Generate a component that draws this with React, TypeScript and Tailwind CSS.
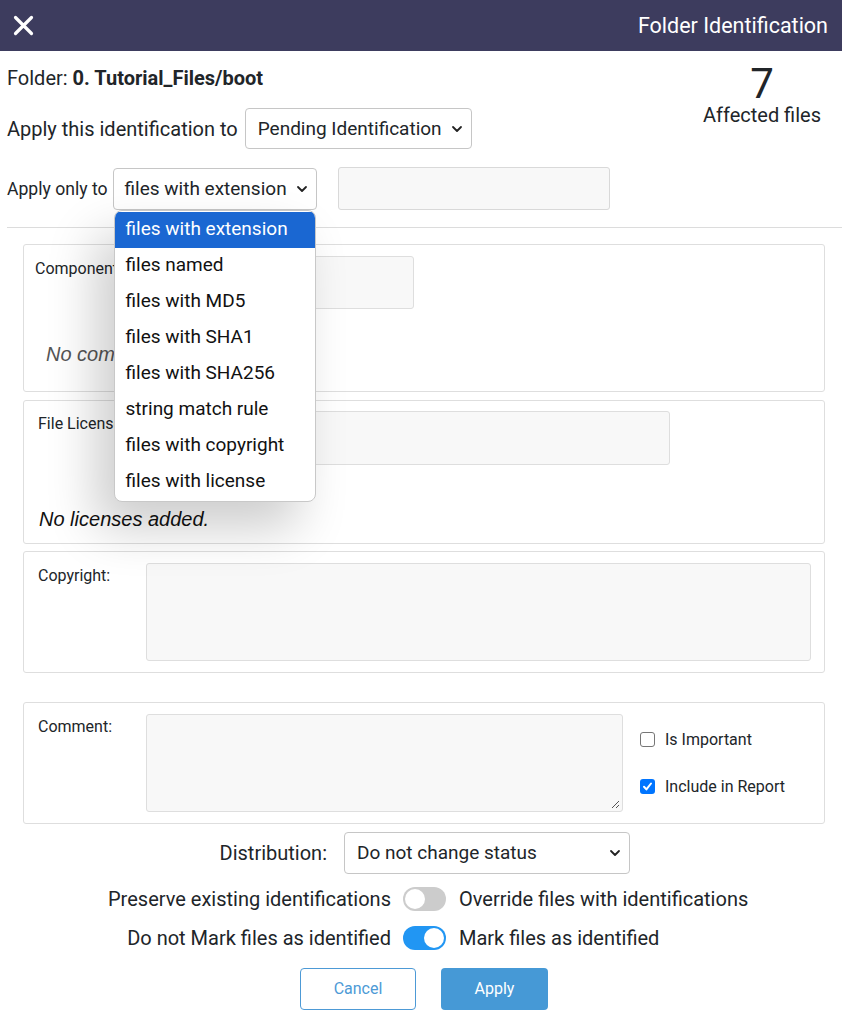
import React from "react";

const Chevron = () => (
  <svg width="12" height="8" viewBox="0 0 12 8" className="shrink-0">
    <path d="M2 2l4 4 4-4" fill="none" stroke="#222" strokeWidth="1.8" strokeLinecap="round" strokeLinejoin="round" />
  </svg>
);

const options = [
  "files with extension",
  "files named",
  "files with MD5",
  "files with SHA1",
  "files with SHA256",
  "string match rule",
  "files with copyright",
  "files with license",
];

const Toggle = ({ on }: { on: boolean }) => (
  <div
    className={
      on
        ? "w-[43px] h-[24px] rounded-full bg-[#2196f3] p-[2px] flex justify-end"
        : "w-[43px] h-[24px] rounded-full bg-[#cccccc] p-[2px] flex justify-start"
    }
  >
    <div className="w-[20px] h-[20px] rounded-full bg-white" />
  </div>
);

const App = () => {
  return (
    <div className="w-[842px] min-h-[1032px] bg-white text-[#212529] font-['Roboto',sans-serif]">
      {/* header */}
      <div className="h-[51px] bg-[#3d3c5e] flex items-center justify-between pl-[13px] pr-[14px] text-white">
        <svg width="21" height="21" viewBox="0 0 21 21">
          <path d="M2.5 2.5l16 16M18.5 2.5l-16 16" stroke="white" strokeWidth="3.2" strokeLinecap="round" />
        </svg>
        <span className="text-[21.5px] leading-[28px]">Folder Identification</span>
      </div>

      {/* top section */}
      <div className="flex justify-between pl-[7px] pr-[21px]">
        <div className="flex flex-col">
          <div className="mt-[15px] h-[24px] text-[20px] leading-[24px]">
            Folder: <span className="font-bold">0. Tutorial_Files/boot</span>
          </div>
          <div className="mt-[18px] flex items-center gap-[7px]">
            <span className="text-[20px] leading-[24px]">Apply this identification to</span>
            <div className="w-[227px] h-[41px] border border-[#c6c6c6] rounded-[4px] flex items-center justify-between pl-[12px] pr-[8px] text-[19px] leading-[24px]">
              <span>Pending Identification</span>
              <Chevron />
            </div>
          </div>
          <div className="mt-[18px] flex items-center">
            <span className="text-[17.6px] leading-[24px] mr-[5px]">Apply only to</span>
            <div className="relative">
              <div className="w-[204px] h-[42px] border border-[#c6c6c6] rounded-[4px] flex items-center justify-between pl-[11px] pr-[8px] text-[19px] leading-[24px]">
                <span>files with extension</span>
                <Chevron />
              </div>
              {/* open menu */}
              <div className="absolute z-10 left-[1px] top-[42px] w-[202px] bg-white rounded-[8px] border border-[#c8c8c8] py-[1px] overflow-hidden shadow-[-18px_26px_50px_rgba(0,0,0,0.2)]">
                {options.map((o, i) => (
                  <div
                    key={o}
                    className={
                      i === 0
                        ? "h-[36px] flex items-center pl-[11px] text-[19px] bg-[#1a67d2] text-white"
                        : "h-[36px] flex items-center pl-[11px] text-[19px] text-[#111]"
                    }
                  >
                    {o}
                  </div>
                ))}
              </div>
            </div>
            <div className="ml-[21px] w-[272px] h-[43px] border border-[#d9d9d9] rounded-[3px] bg-[#f8f8f8]" />
          </div>
        </div>
        <div className="flex flex-col items-center mt-[12px]">
          <span className="text-[42px] leading-[42px]">7</span>
          <span className="text-[20px] leading-[24px] mt-[-2px]">Affected files</span>
        </div>
      </div>

      <div className="ml-[7px] mt-[17px] border-t border-[#dcdcdc]" />

      {/* cards */}
      <div className="ml-[23px] mr-[17px] mt-[16px] flex flex-col">
        <div className="h-[148px] border border-[#dedede] rounded-[3px] pt-[11px]">
          <div className="flex items-start">
            <span className="text-[16px] leading-[20px] ml-[11px] mt-[3px] w-[111px]">Component:</span>
            <div className="w-[268px] h-[53px] border border-[#dedede] rounded-[3px] bg-[#f8f8f8]" />
          </div>
          <div className="ml-[22px] mt-[33px] italic text-[20px] leading-[24px] text-[#555] font-['Liberation_Sans',sans-serif]">
            No components added.
          </div>
        </div>

        <div className="mt-[8px] h-[144px] border border-[#dedede] rounded-[3px] pt-[10px]">
          <div className="flex items-start">
            <span className="text-[16px] leading-[20px] ml-[14px] mt-[3px] w-[108px]">File Licenses:</span>
            <div className="w-[524px] h-[54px] border border-[#dedede] rounded-[3px] bg-[#f8f8f8]" />
          </div>
          <div className="ml-[15px] mt-[42px] italic text-[20px] leading-[24px] text-[#111] font-['Liberation_Sans',sans-serif]">
            No licenses added.
          </div>
        </div>

        <div className="mt-[7px] h-[122px] border border-[#dedede] rounded-[3px] pt-[11px] flex items-start">
          <span className="text-[16px] leading-[20px] ml-[14px] mt-[3px] w-[108px]">Copyright:</span>
          <div className="w-[665px] h-[98px] border border-[#dedede] rounded-[3px] bg-[#f8f8f8]" />
        </div>

        <div className="mt-[29px] h-[122px] border border-[#dedede] rounded-[3px] pt-[11px] flex items-start">
          <span className="text-[16px] leading-[20px] ml-[14px] mt-[3px] w-[108px]">Comment:</span>
          <div className="relative w-[477px] h-[98px] border border-[#dedede] rounded-[3px] bg-[#f8f8f8]">
            <svg width="10" height="10" viewBox="0 0 10 10" className="absolute right-[2px] bottom-[2px]">
              <path d="M9 2L2 9M9 6L6 9" stroke="#555" strokeWidth="1" />
            </svg>
          </div>
          <div className="ml-[17px] flex flex-col gap-[32px] mt-[18px] text-[16px] leading-[20px]">
            <label className="flex items-center gap-[10px] h-[15px]">
              <span className="w-[15px] h-[15px] rounded-[3px] border border-[#767676] bg-white" />
              Is Important
            </label>
            <label className="flex items-center gap-[10px] h-[15px]">
              <span className="w-[15px] h-[15px] rounded-[3px] bg-[#0075ff] flex items-center justify-center">
                <svg width="11" height="11" viewBox="0 0 11 11">
                  <path d="M2 5.8l2.4 2.6L9 2.5" fill="none" stroke="white" strokeWidth="2" strokeLinecap="round" strokeLinejoin="round" />
                </svg>
              </span>
              Include in Report
            </label>
          </div>
        </div>
      </div>

      {/* distribution */}
      <div className="mt-[8px] flex items-center">
        <span className="text-[20px] leading-[24px] w-[327px] text-right">Distribution:</span>
        <div className="ml-[17px] w-[286px] h-[42px] border border-[#c6c6c6] rounded-[4px] flex items-center justify-between pl-[12px] pr-[8px] text-[19px] leading-[24px]">
          <span>Do not change status</span>
          <Chevron />
        </div>
      </div>

      {/* toggles */}
      <div className="mt-[13px] h-[24px] flex items-center text-[20px] leading-[24px]">
        <span className="w-[391px] text-right">Preserve existing identifications</span>
        <div className="ml-[12px]">
          <Toggle on={false} />
        </div>
        <span className="ml-[13px]">Override files with identifications</span>
      </div>
      <div className="mt-[15px] h-[24px] flex items-center text-[20px] leading-[24px]">
        <span className="w-[391px] text-right">Do not Mark files as identified</span>
        <div className="ml-[12px]">
          <Toggle on={true} />
        </div>
        <span className="ml-[13px]">Mark files as identified</span>
      </div>

      {/* buttons */}
      <div className="mt-[18px] flex justify-center gap-[25px] pl-[6px]">
        <button className="w-[116px] h-[42px] rounded-[4px] border border-[#4d9ad6] text-[#4d9ad6] bg-white text-[16px]">
          Cancel
        </button>
        <button className="w-[107px] h-[42px] rounded-[4px] bg-[#4699d6] text-white text-[16px]">
          Apply
        </button>
      </div>
    </div>
  );
};

export default App;
